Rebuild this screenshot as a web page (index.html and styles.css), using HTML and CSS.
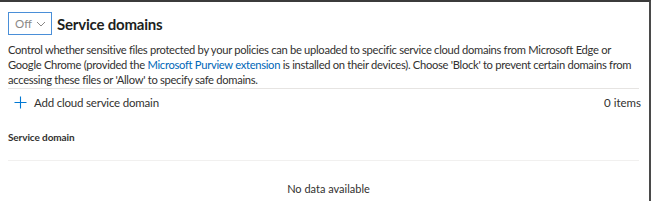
FILE: index.html
```html
<!DOCTYPE html>
<html>
<head>
<meta charset="utf-8">
<link rel="stylesheet" href="styles.css">
</head>
<body>
<div class="frame">
  <div class="header">
    <div class="dropdown">
      <span class="dd-text">Off</span>
      <svg class="chev" width="10" height="6" viewBox="0 0 10 6"><path d="M1 1 L5 5 L9 1" fill="none" stroke="#8a8886" stroke-width="1"/></svg>
    </div>
    <h2 class="title">Service domains</h2>
  </div>
  <p class="desc">Control whether sensitive files protected by your policies can be uploaded to specific service cloud domains from Microsoft Edge or Google Chrome (provided the <span class="link">Microsoft Purview extension</span> is installed on their devices). Choose 'Block' to prevent certain domains from accessing these files or 'Allow' to specify safe domains.</p>
  <div class="divider"></div>
  <div class="commands">
    <div class="add">
      <svg class="plus" width="13" height="13" viewBox="0 0 13 13"><path d="M6.5 0.5 V12.5 M0.5 6.5 H12.5" stroke="#0078d4" stroke-width="1.1" fill="none"/></svg>
      <span>Add cloud service domain</span>
    </div>
    <span class="count">0 items</span>
  </div>
  <div class="colhead">Service domain</div>
  <div class="divider light"></div>
  <div class="empty">No data available</div>
</div>
</body>
</html>
```
FILE: styles.css
```css
html, body {
  margin: 0;
  padding: 0;
  background: #ffffff;
}
body {
  font-family: "Lato", "Open Sans", sans-serif;
  color: #323130;
}
.frame {
  width: 649px;
  height: 199px;
  border-top: 2px solid #3b3b3b;
  border-right: 2px solid #4a4a4a;
  box-sizing: content-box;
  overflow: hidden;
}
.header {
  display: flex;
  align-items: center;
  padding: 10px 0 0 8px;
  gap: 5px;
}
.dropdown {
  height: 21px;
  border: 1px solid #4a8fd8;
  display: flex;
  align-items: center;
  gap: 4px;
  padding-left: 6px;
  box-sizing: content-box;
  width: 36px;
}
.dd-text {
  font-size: 11.5px;
  color: #8a8886;
}
.chev {
  display: block;
}
.title {
  margin: 0;
  font-size: 15px;
  font-weight: 700;
  color: #201f1e;
  letter-spacing: -0.2px;
}
.desc {
  margin: 7px 0 0 8px;
  width: 630px;
  font-size: 11.2px;
  line-height: 15px;
  letter-spacing: -0.3px;
  color: #323130;
}
.link {
  color: #0067b8;
}
.divider {
  margin: 1px 10px 0 8px;
  height: 1px;
  background: #e6e4e2;
}
.divider.light {
  margin-top: 16px;
  background: #f1f0ef;
}
.commands {
  display: flex;
  justify-content: space-between;
  align-items: center;
  padding: 5px 8px 0 14px;
  height: 16px;
}
.add {
  display: flex;
  align-items: center;
  gap: 7px;
  font-size: 11.5px;
  letter-spacing: -0.2px;
  color: #323130;
}
.plus {
  display: block;
}
.count {
  font-size: 11.5px;
}
.colhead {
  margin: 20px 0 0 8px;
  height: 14px;
  line-height: 14px;
  font-size: 10px;
  font-weight: 700;
  letter-spacing: -0.1px;
  color: #323130;
}
.empty {
  text-align: center;
  margin-top: 20px;
  padding-left: 8px;
  line-height: 15px;
  font-size: 11px;
  color: #323130;
}
```
